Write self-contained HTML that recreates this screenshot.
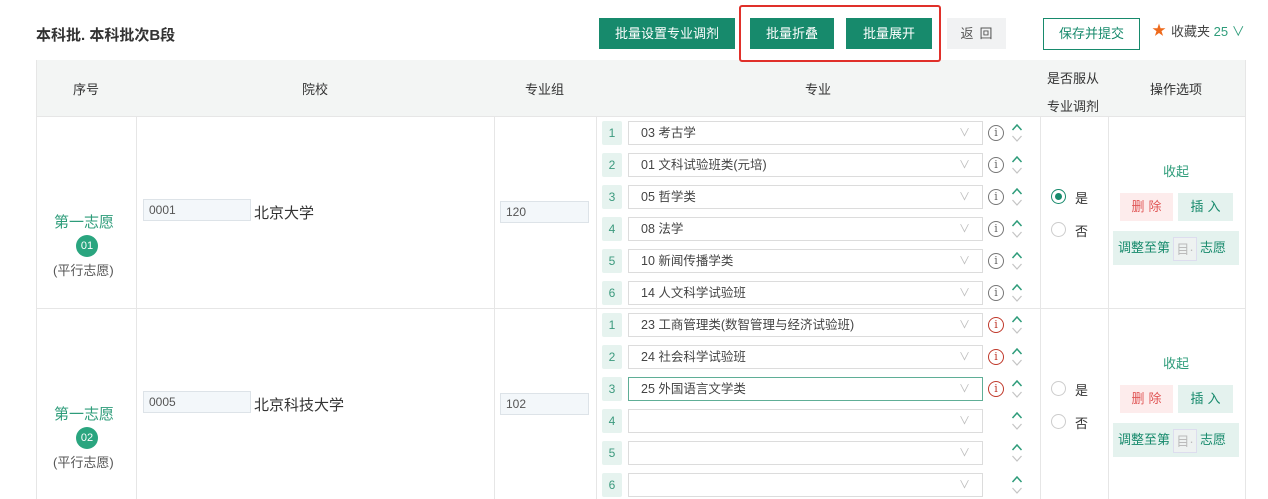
<!DOCTYPE html>
<html><head><meta charset="utf-8"><style>
*{box-sizing:border-box;margin:0;padding:0}
body{width:1268px;height:499px;overflow:hidden;background:#fff;font-family:"Liberation Sans","Noto Sans CJK SC",sans-serif;font-size:13px;color:#333;position:relative}
.a{position:absolute}
.btn{position:absolute;height:31px;line-height:31px;text-align:center;color:#fff;background:#178a6c;font-size:13px}
.vl{position:absolute;width:1px;background:#e6e6e6}
.hl{position:absolute;height:1px;background:#e6e6e6}
.n{position:absolute;left:602px;width:20px;height:24px;line-height:24px;text-align:center;background:#e6f3ef;color:#3c9a7e;font-size:12px;border-radius:2px}
.s{position:absolute;left:628px;width:355px;height:24px;line-height:22px;border:1px solid #dcdcdc;padding-left:12px;font-size:12.5px;color:#444;background:#fff}
.s:after{content:"∨";position:absolute;right:12px;top:0;color:#bbb;font-size:11px}
.i{position:absolute;left:988px;width:16px;height:16px;border:1px solid #777;border-radius:50%;font-size:11px;line-height:14px;text-align:center;color:#666;font-family:"DejaVu Serif",serif}
.i.r{border-color:#c0392b;color:#c0392b}
.ar{position:absolute;left:1011px;width:12px;height:22px}
.inp{position:absolute;height:22px;border:1px solid #dde3e8;background:#f3f7fa;font-size:12px;line-height:20px;padding-left:5px;color:#555}
.rad{position:absolute;width:15px;height:15px;border:1px solid #ccc;border-radius:50%}
.rad.on{border-color:#178a6c}.rad.on:after{content:"";position:absolute;left:3px;top:3px;width:7px;height:7px;border-radius:50%;background:#178a6c}
.t{color:#2e9c7a}
</style></head><body>
<svg width="0" height="0" style="position:absolute"><defs><g id="arr"><path d="M1.5 8 L6 3 L10.5 8" fill="none" stroke="#2e9c7a" stroke-width="1.5"/><path d="M1.5 14 L6 19 L10.5 14" fill="none" stroke="#c4c4c4" stroke-width="1.2"/></g></defs></svg>
<div class="a" style="left:36px;top:24px;font-size:15px;font-weight:bold;color:#333">本科批. 本科批次B段</div>
<div class="btn" style="left:599px;top:18px;width:136px">批量设置专业调剂</div>
<div class="btn" style="left:750px;top:18px;width:84px">批量折叠</div>
<div class="btn" style="left:846px;top:18px;width:86px">批量展开</div>
<div class="a" style="left:947px;top:18px;width:59px;height:31px;line-height:31px;background:#f1f2f3;text-align:center;color:#555;letter-spacing:6px;padding-left:6px">返回</div>
<div class="a" style="left:1043px;top:18px;width:97px;height:32px;line-height:30px;border:1px solid #178a6c;text-align:center;color:#178a6c">保存并提交</div>
<div class="a" style="left:1152px;top:20px;color:#ee6a1c;font-size:14px">★</div>
<div class="a" style="left:1171px;top:21px;color:#444">收藏夹 <span class="t">25 ∨</span></div>

<div class="a" style="left:36px;top:60px;width:1209px;height:56px;background:#f3f5f4"></div>
<div class="a" style="left:739px;top:5px;width:202px;height:57px;border:2px solid #e0302a;border-radius:3px;z-index:5"></div>
<div class="a" style="left:73px;top:79px">序号</div>
<div class="a" style="left:302px;top:79px">院校</div>
<div class="a" style="left:525px;top:79px">专业组</div>
<div class="a" style="left:805px;top:79px">专业</div>
<div class="a" style="left:1047px;top:65px;line-height:28px">是否服从<br>专业调剂</div>
<div class="a" style="left:1150px;top:79px">操作选项</div>

<div class="hl" style="left:36px;top:116px;width:1209px"></div>
<div class="hl" style="left:36px;top:308px;width:1209px"></div>
<div class="vl" style="left:36px;top:60px;height:439px"></div>
<div class="vl" style="left:136px;top:116px;height:383px"></div>
<div class="vl" style="left:494px;top:116px;height:383px"></div>
<div class="vl" style="left:596px;top:116px;height:383px"></div>
<div class="vl" style="left:1040px;top:116px;height:383px"></div>
<div class="vl" style="left:1108px;top:116px;height:383px"></div>
<div class="vl" style="left:1245px;top:60px;height:439px"></div>

<!-- row 1 -->
<div class="a t" style="left:54px;top:211px;font-size:15px">第一志愿</div>
<div class="a" style="left:76px;top:235px;width:22px;height:22px;border-radius:50%;background:#2aa57f;color:#fff;font-size:11px;line-height:22px;text-align:center">01</div>
<div class="a" style="left:53px;top:260px;color:#555">(平行志愿)</div>
<div class="inp" style="left:143px;top:199px;width:108px">0001</div>
<div class="a" style="left:254px;top:202px;font-size:15px;color:#333">北京大学</div>
<div class="inp" style="left:500px;top:201px;width:89px">120</div>

<div class="n" style="top:121px">1</div><div class="s" style="top:121px">03 考古学</div><div class="i" style="top:125px">i</div><svg class="ar" style="top:122px"><use href="#arr"/></svg>
<div class="n" style="top:153px">2</div><div class="s" style="top:153px">01 文科试验班类(元培)</div><div class="i" style="top:157px">i</div><svg class="ar" style="top:154px"><use href="#arr"/></svg>
<div class="n" style="top:185px">3</div><div class="s" style="top:185px">05 哲学类</div><div class="i" style="top:189px">i</div><svg class="ar" style="top:186px"><use href="#arr"/></svg>
<div class="n" style="top:217px">4</div><div class="s" style="top:217px">08 法学</div><div class="i" style="top:221px">i</div><svg class="ar" style="top:218px"><use href="#arr"/></svg>
<div class="n" style="top:249px">5</div><div class="s" style="top:249px">10 新闻传播学类</div><div class="i" style="top:253px">i</div><svg class="ar" style="top:250px"><use href="#arr"/></svg>
<div class="n" style="top:281px">6</div><div class="s" style="top:281px">14 人文科学试验班</div><div class="i" style="top:285px">i</div><svg class="ar" style="top:282px"><use href="#arr"/></svg>

<div class="rad on" style="left:1051px;top:189px"></div><div class="a" style="left:1075px;top:188px">是</div>
<div class="rad" style="left:1051px;top:222px"></div><div class="a" style="left:1075px;top:221px">否</div>
<div class="a t" style="left:1163px;top:161px">收起</div>
<div class="a" style="left:1120px;top:193px;width:53px;height:28px;line-height:28px;background:#fdecec;color:#e05656;text-align:center;letter-spacing:4px;padding-left:4px">删除</div>
<div class="a" style="left:1178px;top:193px;width:55px;height:28px;line-height:28px;background:#e4f2ee;color:#178a6c;text-align:center;letter-spacing:4px;padding-left:4px">插入</div>
<div class="a" style="left:1113px;top:231px;width:126px;height:34px;line-height:34px;background:#e4f2ee;color:#178a6c;padding-left:5px">调整至第<span style="display:inline-block;width:24px;height:24px;line-height:24px;vertical-align:middle;background:#eef2f1;border:1px solid #dde;color:#bbb;text-align:center;margin:0 3px">目·</span>志愿</div>

<!-- row 2 -->
<div class="a t" style="left:54px;top:403px;font-size:15px">第一志愿</div>
<div class="a" style="left:76px;top:427px;width:22px;height:22px;border-radius:50%;background:#2aa57f;color:#fff;font-size:11px;line-height:22px;text-align:center">02</div>
<div class="a" style="left:53px;top:452px;color:#555">(平行志愿)</div>
<div class="inp" style="left:143px;top:391px;width:108px">0005</div>
<div class="a" style="left:254px;top:394px;font-size:15px;color:#333">北京科技大学</div>
<div class="inp" style="left:500px;top:393px;width:89px">102</div>

<div class="n" style="top:313px">1</div><div class="s" style="top:313px">23 工商管理类(数智管理与经济试验班)</div><div class="i r" style="top:317px">i</div><svg class="ar" style="top:314px"><use href="#arr"/></svg>
<div class="n" style="top:345px">2</div><div class="s" style="top:345px">24 社会科学试验班</div><div class="i r" style="top:349px">i</div><svg class="ar" style="top:346px"><use href="#arr"/></svg>
<div class="n" style="top:377px">3</div><div class="s" style="top:377px;border-color:#5fae96">25 外国语言文学类</div><div class="i r" style="top:381px">i</div><svg class="ar" style="top:378px"><use href="#arr"/></svg>
<div class="n" style="top:409px">4</div><div class="s" style="top:409px"></div><svg class="ar" style="top:410px"><use href="#arr"/></svg>
<div class="n" style="top:441px">5</div><div class="s" style="top:441px"></div><svg class="ar" style="top:442px"><use href="#arr"/></svg>
<div class="n" style="top:473px">6</div><div class="s" style="top:473px"></div><svg class="ar" style="top:474px"><use href="#arr"/></svg>

<div class="rad" style="left:1051px;top:381px"></div><div class="a" style="left:1075px;top:380px">是</div>
<div class="rad" style="left:1051px;top:414px"></div><div class="a" style="left:1075px;top:413px">否</div>
<div class="a t" style="left:1163px;top:353px">收起</div>
<div class="a" style="left:1120px;top:385px;width:53px;height:28px;line-height:28px;background:#fdecec;color:#e05656;text-align:center;letter-spacing:4px;padding-left:4px">删除</div>
<div class="a" style="left:1178px;top:385px;width:55px;height:28px;line-height:28px;background:#e4f2ee;color:#178a6c;text-align:center;letter-spacing:4px;padding-left:4px">插入</div>
<div class="a" style="left:1113px;top:423px;width:126px;height:34px;line-height:34px;background:#e4f2ee;color:#178a6c;padding-left:5px">调整至第<span style="display:inline-block;width:24px;height:24px;line-height:24px;vertical-align:middle;background:#eef2f1;border:1px solid #dde;color:#bbb;text-align:center;margin:0 3px">目·</span>志愿</div>
</body></html>
